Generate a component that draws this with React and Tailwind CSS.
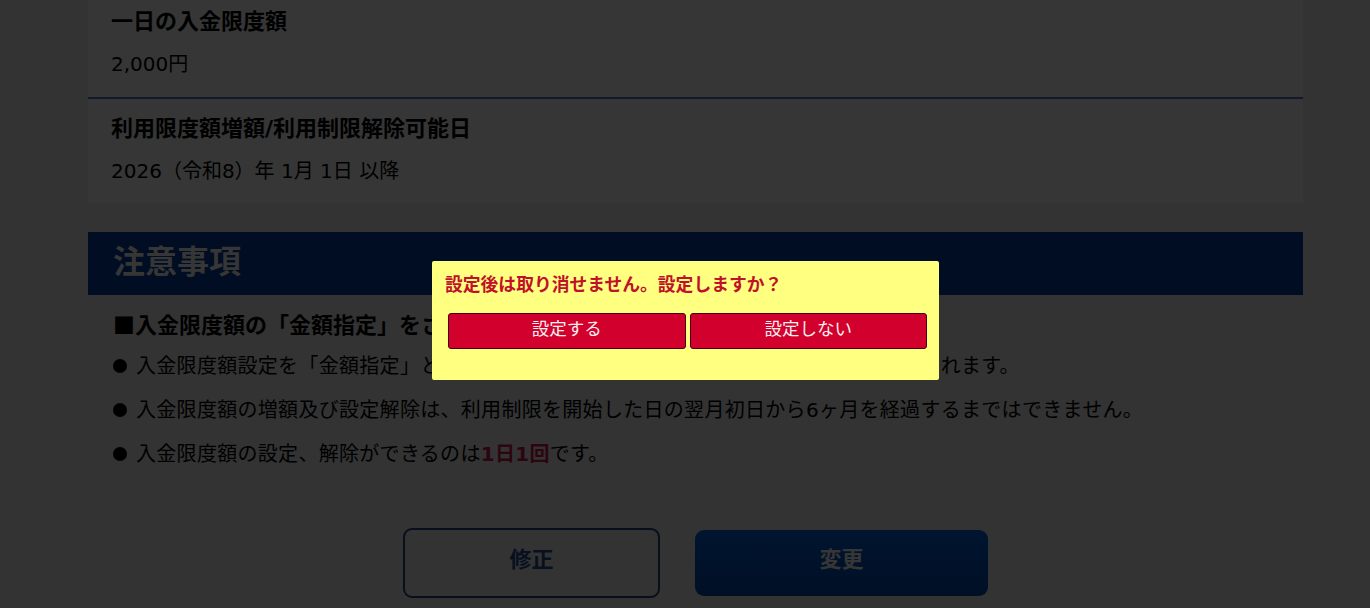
import React from "react";

const font = { fontFamily: '"DejaVu Sans", "Noto Sans CJK JP", "Noto Sans", sans-serif' };
const cjk = { fontFamily: '"Noto Sans CJK JP", "Noto Sans", sans-serif' };

export default function App() {
  return (
    <div className="relative min-h-[608px] w-[1370px] overflow-hidden bg-[#333333]" style={font}>
      <div className="ml-[88px] w-[1215px]">
        {/* info panel */}
        <div className="bg-[#363636]">
          <div className="px-[23px] pt-[6px] pb-[18px]">
            <div className="text-[22px] leading-[32px] font-bold text-black">一日の入金限度額</div>
            <div className="mt-[11px] text-[20px] leading-[30px] text-black">2,000円</div>
          </div>
          <div className="h-[2px] bg-[#111a28]"></div>
          <div className="px-[23px] pt-[14px] pb-[17px]">
            <div className="text-[22px] leading-[32px] font-bold text-black">利用限度額増額/利用制限解除可能日</div>
            <div className="mt-[11px] text-[20px] leading-[30px] text-black">2026（令和8）年 1月 1日 以降</div>
          </div>
        </div>

        {/* notice header */}
        <div className="mt-[29px] flex h-[63px] items-center bg-[#000d22] px-[25px] pb-[9px]">
          <span className="text-[32px] font-bold leading-none text-[#363636]" style={cjk}>注意事項</span>
        </div>

        <div className="px-[25px] pt-[12px]">
          <div className="text-[22px] leading-[32px] font-bold text-black" style={cjk}>■入金限度額の「金額指定」をされた場合</div>
          <ul className="mt-[11px] flex flex-col gap-[12px] text-[20px] leading-[32px] tracking-[0.3px] text-black">
            <li className="flex items-center">
              <span className="mr-[9px] inline-block h-[14px] w-[14px] shrink-0 rounded-full bg-black"></span>
              <span>入金限度額設定を「金額指定」とした場合、1日の入金総額が指定した金額までに制限されます。</span>
            </li>
            <li className="flex items-center">
              <span className="mr-[9px] inline-block h-[14px] w-[14px] shrink-0 rounded-full bg-black"></span>
              <span>入金限度額の増額及び設定解除は、利用制限を開始した日の翌月初日から6ヶ月を経過するまではできません。</span>
            </li>
            <li className="flex items-center">
              <span className="mr-[9px] inline-block h-[14px] w-[14px] shrink-0 rounded-full bg-black"></span>
              <span>
                入金限度額の設定、解除ができるのは<span className="font-bold text-[#2c0510]">1日1回</span>です。
              </span>
            </li>
          </ul>
        </div>

        {/* buttons */}
        <div className="mt-[58px] flex items-center justify-center gap-[35px]">
          <button className="flex h-[70px] w-[257px] items-center justify-center rounded-[9px] border-2 border-[#080e1c] bg-transparent pb-[12px] text-[22px] font-bold text-[#081020]" style={cjk}>
            修正
          </button>
          <button className="flex h-[66px] w-[293px] items-center justify-center rounded-[9px] bg-gradient-to-b from-[#001530] to-[#000f24] pb-[12px] text-[22px] font-bold text-[#363636]" style={cjk}>
            変更
          </button>
        </div>
      </div>

      {/* confirm dialog */}
      <div className="absolute left-[432px] top-[261px] w-[507px] rounded-[2px] bg-[#ffff80] pt-[11px] pr-[12px] pb-[31px] pl-[13px]" style={cjk}>
        <div className="text-[17.8px] leading-[22px] font-bold text-[#c0102a]">設定後は取り消せません。設定しますか？</div>
        <div className="mt-[19px] flex gap-[4px] pl-[3px]">
          <button className="flex h-[36px] flex-1 items-center justify-center rounded-[3px] border border-[#4a0010] bg-[#d1002c] pb-[6px] text-[17.5px] leading-[24px] text-[#fbeef0]">
            設定する
          </button>
          <button className="flex h-[36px] flex-1 items-center justify-center rounded-[3px] border border-[#4a0010] bg-[#d1002c] pb-[6px] text-[17.5px] leading-[24px] text-[#fbeef0]">
            設定しない
          </button>
        </div>
      </div>
    </div>
  );
}
